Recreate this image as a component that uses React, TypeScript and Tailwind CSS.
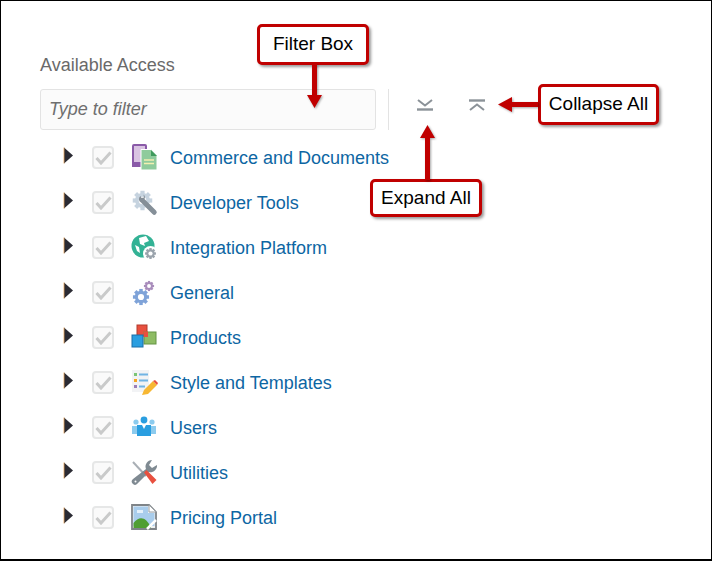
import type { ReactNode } from 'react'

const Tri = () => (
  <svg width="12" height="20" viewBox="0 0 12 20" className="shrink-0">
    <path d="M1 1.5 L10 9.5 L1 17.5 Z" fill="#2b2b33" />
    <path d="M1 1.5 V17.5" stroke="#e9a45c" strokeWidth="0.8" />
  </svg>
)

const Check = () => (
  <div className="flex h-[23px] w-[22px] shrink-0 items-center justify-center rounded-[4px] border-2 border-[#e6e7e7] bg-[#fafafa]">
    <svg width="17" height="14" viewBox="0 0 17 14">
      <path d="M1.5 7 L6 12 L15.5 1.5" fill="none" stroke="#c9caca" strokeWidth="3" />
    </svg>
  </div>
)

const Gear = ({ cx, cy, r, color, hole = '#fff' }: { cx: number; cy: number; r: number; color: string; hole?: string }) => (
  <g>
    {[0, 45, 90, 135].map((a) => (
      <rect key={a} x={cx - r * 0.28} y={cy - r * 1.3} width={r * 0.56} height={r * 2.6} fill={color} transform={`rotate(${a} ${cx} ${cy})`} />
    ))}
    <circle cx={cx} cy={cy} r={r} fill={color} />
    <circle cx={cx} cy={cy} r={r * 0.5} fill={hole} />
  </g>
)

const icons: Record<string, ReactNode> = {
  commerce: (
    <>
      <rect x="2" y="1" width="13" height="21" rx="1" fill="#d9c3e2" stroke="#8a5aa8" strokeWidth="2" />
      <rect x="1" y="18" width="15" height="5" fill="#8a5aa8" />
      <path d="M10 5.5 H20 L26 11.5 V26 H10 Z" fill="#8fcb9c" stroke="#fff" strokeWidth="1" />
      <path d="M20 6 L26 12 H20 Z" fill="#3f9a5c" />
      <path d="M13 16 H23 M13 19.5 H23" stroke="#f4f0b0" strokeWidth="1.6" />
    </>
  ),
  dev: (
    <>
      <Gear cx={11.5} cy={11.5} r={7.5} color="#c6d3df" />
      <path d="M9.5 7 A3.8 3.8 0 0 0 10 13.5 L21.5 25 A2.2 2.2 0 0 0 25 21.5 L13.5 10 A3.8 3.8 0 0 0 12.5 5.5 L13 8.5 L10.5 9 Z" fill="#858f98" />
    </>
  ),
  integration: (
    <>
      <circle cx="12" cy="12" r="11.5" fill="#33b295" />
      <path d="M8 4 L15 2 L18 7 L13 9 L14 12 L9 10 Z M4 11 L8 13 L9 19 L6 17 Z" fill="#fff" />
      <circle cx="19.5" cy="19.5" r="7.5" fill="#fff" />
      <Gear cx={19.5} cy={19.5} r={4.2} color="#9aa3ac" />
    </>
  ),
  general: (
    <>
      <Gear cx={10} cy={18} r={6.2} color="#7fa3d8" />
      <Gear cx={18} cy={7} r={3.9} color="#a88cbb" />
    </>
  ),
  products: (
    <>
      <rect x="6" y="1" width="10" height="11" fill="#e8503f" stroke="#b13a2d" strokeWidth="1" />
      <rect x="13" y="8" width="12" height="12" fill="#8ebc64" stroke="#659445" strokeWidth="1" />
      <path d="M12.5 7.5 H17 V13 H12.5 Z" fill="#e8503f" />
      <rect x="1" y="11" width="11" height="12" fill="#2a9ee0" stroke="#1a6ea8" strokeWidth="1" />
    </>
  ),
  style: (
    <>
      <rect x="1" y="1" width="17" height="22" fill="#f2f3f5" />
      <rect x="3" y="4" width="3" height="3" fill="#7cc576" />
      <rect x="3" y="10" width="3" height="3" fill="#f5a623" />
      <rect x="3" y="16" width="3" height="3" fill="#9a7fb8" />
      <path d="M8 5.5 H17 M8 11.5 H17 M8 17.5 H14" stroke="#71b4e4" strokeWidth="2" />
      <path d="M11 26 L13 21 L22 12 L26 16 L17 25 Z" fill="#f7b733" />
      <path d="M22 12 L24 11 L27 14 L26 16 Z" fill="#e8503f" />
    </>
  ),
  users: (
    <>
      <circle cx="5" cy="8" r="2.6" fill="#8ccbee" />
      <circle cx="21" cy="8" r="2.6" fill="#8ccbee" />
      <path d="M1 12 H7 V20 H1 Z M19 12 H25 V20 H19 Z" fill="#8ccbee" />
      <circle cx="13" cy="6" r="3.4" fill="#2a9ee0" />
      <path d="M6 11 H20 V22 H6 Z" fill="#2a9ee0" />
      <path d="M11 11 H15 L13 15 Z" fill="#fff" />
    </>
  ),
  utilities: (
    <>
      <path d="M2 3 L15 17" stroke="#a9afb5" strokeWidth="2" />
      <path d="M21 1 A6.5 6.5 0 0 0 15 10 L2 20 A3 3 0 0 0 6 25 L18 13 A6.5 6.5 0 0 0 26 6 L21 9 L18 6 Z" fill="#7f8a92" />
      <path d="M13 13.5 L15.5 11 L25.5 21 L21.5 25 Z" fill="#e8503f" />
      <circle cx="4.5" cy="22.5" r="1" fill="#fff" />
    </>
  ),
  pricing: (
    <>
      <path d="M1 1 H18 L25 8 V25 H1 Z" fill="#eef1f3" stroke="#7f8488" strokeWidth="1.8" />
      <path d="M2.5 2.5 H17 V9 H23.5 V22 H2.5 Z" fill="#a9cdec" />
      <path d="M6 6 H12 V9 H6 Z" fill="#e4f0fa" />
      <path d="M2.5 24 V19 C8 12 15 12 20 24 Z" fill="#4f9e32" />
      <path d="M16 25 L25 16" stroke="#fff" strokeWidth="2.5" />
      <path d="M18 1 L25 8 H18 Z" fill="#fff" stroke="#9aa0a4" strokeWidth="1" />
    </>
  ),
}

const rows = [
  { icon: 'commerce', label: 'Commerce and Documents' },
  { icon: 'dev', label: 'Developer Tools' },
  { icon: 'integration', label: 'Integration Platform' },
  { icon: 'general', label: 'General' },
  { icon: 'products', label: 'Products' },
  { icon: 'style', label: 'Style and Templates' },
  { icon: 'users', label: 'Users' },
  { icon: 'utilities', label: 'Utilities' },
  { icon: 'pricing', label: 'Pricing Portal' },
]

const Callout = ({ className, children }: { className: string; children: ReactNode }) => (
  <div className={`absolute flex items-center justify-center rounded-[5px] border-[3px] border-[#c00000] bg-white text-[19px] text-black shadow-[2px_2px_3px_rgba(0,0,0,0.4)] ${className}`}>
    {children}
  </div>
)

export default function App() {
  return (
    <div className="relative h-[561px] w-[712px] overflow-hidden border border-b-2 border-black bg-white pt-[53px] pl-[39px] font-['Liberation_Sans',Arial,sans-serif]">
      <div className="text-[18px] leading-[22px] text-[#6a6a6a]">Available Access</div>

      <div className="mt-[13px] flex items-center">
        <div className="flex h-[41px] w-[336px] items-center rounded-[3px] border border-[#e3e3e3] bg-[#fbfbfb] pl-[8px] text-[18px] text-[#6f6f6f] italic">
          Type to filter
        </div>
        <div className="ml-[12px] h-[41px] w-px bg-[#e3e3e3]" />
        <svg width="16" height="12" viewBox="0 0 16 12" className="mb-[10px] ml-[28px]">
          <path d="M1 1 L8 6.5 L15 1" fill="none" stroke="#8b9298" strokeWidth="2" />
          <path d="M0 10.5 H16" stroke="#8b9298" strokeWidth="2.4" />
        </svg>
        <svg width="16" height="12" viewBox="0 0 16 12" className="mb-[10px] ml-[36px]">
          <path d="M0 1.5 H16" stroke="#8b9298" strokeWidth="2.4" />
          <path d="M1 11 L8 5.5 L15 11" fill="none" stroke="#8b9298" strokeWidth="2" />
        </svg>
      </div>

      <div className="mt-[5px] flex flex-col">
        {rows.map((r) => (
          <div key={r.label} className="flex h-[45px] items-center">
            <div className="ml-[23px] flex w-[29px] -translate-y-[2px]">
              <Tri />
            </div>
            <Check />
            <svg width="27" height="27" viewBox="0 0 27 27" className="ml-[17px] shrink-0">
              {icons[r.icon]}
            </svg>
            <span className="mt-[1px] ml-[12px] text-[18px] whitespace-nowrap text-[#0d66a3]">{r.label}</span>
          </div>
        ))}
      </div>

      <Callout className="top-[23px] left-[256px] h-[41px] w-[112px]">Filter Box</Callout>
      <Callout className="top-[83px] left-[537px] h-[41px] w-[121px]">Collapse All</Callout>
      <Callout className="top-[178px] left-[369px] h-[38px] w-[112px]">Expand All</Callout>

      <svg className="absolute top-0 left-0" width="712" height="561" viewBox="0 0 712 561" style={{ pointerEvents: 'none' }}>
        <g fill="#c00000" style={{ filter: 'drop-shadow(1px 1px 1px rgba(0,0,0,0.35))' }}>
          <path d="M311 63 H316 V94 H321 L313.5 107 L306 94 H311 Z" />
          <path d="M424 179 V137 H419 L426.5 124 L434 137 H429 V179 Z" />
          <path d="M537 101 V106 H511 V111 L497 103.5 L511 96 V101 Z" />
        </g>
      </svg>
    </div>
  )
}
